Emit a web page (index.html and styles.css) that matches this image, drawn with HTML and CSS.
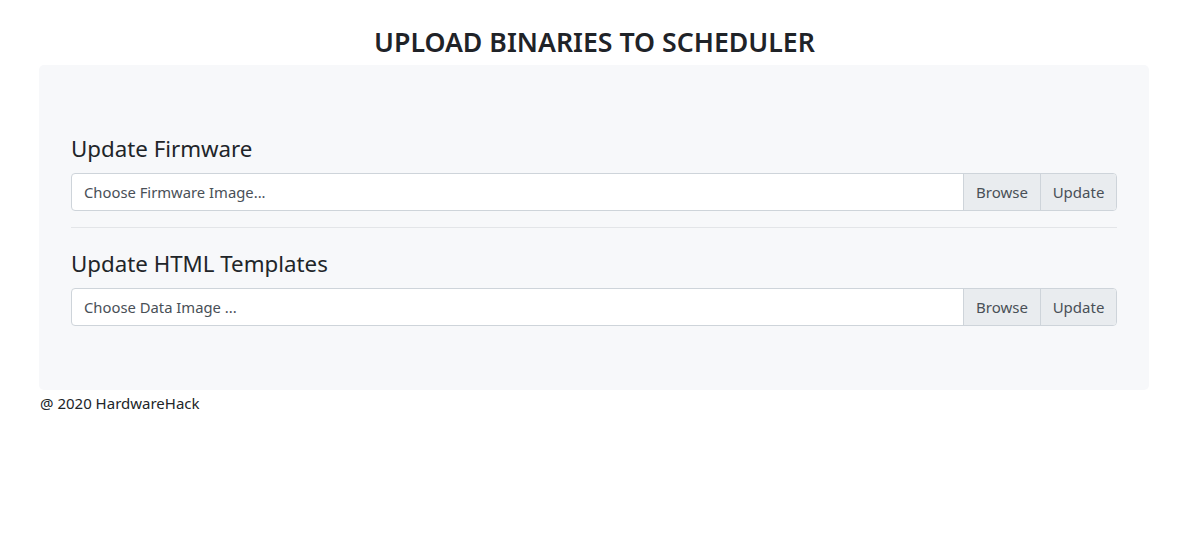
FILE: index.html
```html
<!DOCTYPE html>
<html>
<head>
<meta charset="utf-8">
<link rel="stylesheet" href="styles.css">
</head>
<body>
<div class="page">
  <h3 class="title">UPLOAD BINARIES TO SCHEDULER</h3>
  <div class="jumbotron">
    <section class="block">
      <h4 class="block-title">Update Firmware</h4>
      <div class="input-group">
        <div class="file-label">Choose Firmware Image...</div>
        <span class="btn">Browse</span>
        <span class="btn btn-last">Update</span>
      </div>
    </section>
    <hr class="divider">
    <section class="block">
      <h4 class="block-title">Update HTML Templates</h4>
      <div class="input-group">
        <div class="file-label">Choose Data Image ...</div>
        <span class="btn">Browse</span>
        <span class="btn btn-last">Update</span>
      </div>
    </section>
  </div>
  <footer class="footer">@ 2020 HardwareHack</footer>
</div>
</body>
</html>
```
FILE: styles.css
```css
* { box-sizing: border-box; }
html, body {
  margin: 0;
  padding: 0;
  background: #fff;
}
body {
  font-family: "Segoe UI", "Noto Sans", "Open Sans", sans-serif;
  color: #212529;
  font-size: 16px;
  line-height: 1.5;
}
.page {
  width: 1110px;
  margin-left: 39px;
  display: flex;
  flex-direction: column;
}
.title {
  margin: 26px 0 0 0;
  height: 39px;
  font-size: 26.7px;
  font-weight: 600;
  line-height: 1.2;
  text-align: center;
  padding-left: 1px;
  color: #1f2328;
}
.jumbotron {
  background: #f7f8fa;
  border-radius: 5px;
  padding: 64px 32px 64px 32px;
  display: flex;
  flex-direction: column;
}
.block {
  display: flex;
  flex-direction: column;
}
.block-title {
  margin: 6px 0 9px 0;
  font-size: 22.3px;
  font-weight: 400;
  line-height: 1.25;
  height: 29px;
}
.input-group {
  display: flex;
  height: 38px;
  border: 1px solid #ced4da;
  border-radius: 4px;
  background: #fff;
  overflow: hidden;
}
.file-label {
  flex: 1;
  padding: 0 12px;
  display: flex;
  align-items: center;
  font-size: 14.8px;
  color: #495057;
}
.btn {
  width: 77px;
  display: flex;
  align-items: center;
  justify-content: center;
  background: #e9ecef;
  border-left: 1px solid #ced4da;
  color: #495057;
  font-size: 15px;
}
.btn-last { width: 76px; }
.divider {
  margin: 16px 0;
  border: 0;
  border-top: 1px solid #e3e5e8;
  height: 0;
}
.footer {
  margin-top: 2px;
  padding-left: 1px;
  font-size: 15px;
}
```
